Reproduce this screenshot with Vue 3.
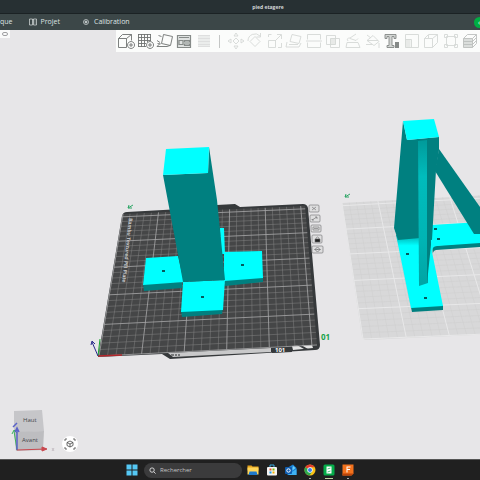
<template>
  <div class="app">
    <header class="titlebar">
      <span class="doc-name">pied etagere</span>
    </header>

    <nav class="tabs">
      <button class="tab first">que</button>
      <button class="tab">
        <svg viewBox="0 0 8 8" class="tab-icon"><path d="M.5 1h3v6h-3zM4.500 1h3v6h-3zM3.500 1.500h1M5.500 3h1M5.500 5h1" /></svg>
        Projet
      </button>
      <button class="tab">
        <svg viewBox="0 0 8 8" class="tab-icon"><circle cx="4" cy="4" r="2.500" /><circle cx="4" cy="4" r="1" class="solid" /></svg>
        Calibration
      </button>
      <button class="go" aria-label="Imprimer">‹</button>
    </nav>

    <main class="viewport">
      <svg class="scene" viewBox="0 30 480 429">
        <defs>
          <linearGradient id="rib" x1="0" y1="0" x2="0" y2="1">
            <stop offset="0" stop-color="#009a9a" />
            <stop offset="0.25" stop-color="#00bcbc" />
            <stop offset="0.7" stop-color="#00b4b4" />
            <stop offset="1" stop-color="#00a4a4" />
          </linearGradient>
          <linearGradient id="foot" x1="0" y1="0" x2="0" y2="1">
            <stop offset="0" stop-color="#008080" />
            <stop offset="0.2" stop-color="#00ffff" />
          </linearGradient>
        </defs>

        <!-- active plate -->
        <path class="bezel" d="M122 216Q123 212 127 212L217 207V205L235 204L240 207L303 204Q307 204 308 208L320 345Q320 350 315 350L170 359L162 354L98 357Z" />
        <path class="plate" d="M123 214L305 206L317 345L99 356Z" />
        <path class="bezel-light" d="M168 353L271 348V352L173 357Z" />
        <path class="slot" d="M292 346L312 345L313 348L293 350Z" />
        <path class="bezel" d="M271 347L291 346L292 352L272 353ZM297 345L301 345L308 349L304 349Z" />
        <path class="minor" :d="darkGrid.minor" />
        <path class="major" :d="darkGrid.major" />
        <text class="plate-text" transform="translate(129 218) rotate(96)">Bambu Textured PEI Plate</text>
        <text class="plate-id" x="275" y="352">101</text>
        <path class="print" d="M171 355h3M175 355h2M178 355h2" />
        <path class="pen" d="M128 208l5-3M129 205l-1 3h4" />
        <text class="plate-no" x="321" y="340">01</text>

        <!-- axes -->
        <path d="M98 356L100 339" stroke="#16a52f" />
        <path d="M98 356L122 355" stroke="#b5262b" stroke-width="1.500" />
        <path d="M98 356L92 342M91 345l1-4 3 3" class="axis-z" />

        <!-- plate buttons -->
        <g class="plate-btns">
          <rect x="309" y="205" width="10" height="7" rx="1" />
          <rect x="310" y="215" width="10" height="7" rx="1" />
          <rect x="311" y="225" width="10" height="7" rx="1" />
          <rect x="312" y="235" width="10" height="8" rx="1" />
          <rect x="312" y="246" width="11" height="7" rx="1" />
          <path d="M312 207l4 3M316 207l-4 3M312 220l5-3M315 217h2v2M312 219v1h2M313 227h6v3h-6zM314 228.500h4" />
          <path class="lock" d="M315 239h5v3h-5z" />
          <path d="M316 239v-1q1.500-2 3 0v1" />
          <circle cx="317.500" cy="249.500" r="2" />
          <path d="M314 249.500h7M317.500 249v1" />
        </g>

        <!-- post with cross foot -->
        <path class="lit" d="M220 228H224L225 254H221Z" />
        <path class="dark" d="M143 284L182 282V288L144 291ZM225 280L263 277V282L225 286ZM181 311L223 308L222 314L182 317Z" />
        <path class="lit" d="M146 258L178 256L184 282L143 285ZM224 252L262 251L263 278L224 281ZM183 282L225 280L223 310L181 312Z" />
        <path class="dark" d="M163 175L208 173L209 147L217 200L225 280L183 282L179 260Z" />
        <path class="lit" d="M166 149L209 147L208 173L163 175Z" />
        <path class="hole" d="M162 271h3M201 297h3M241 265h3" />

        <!-- inactive plate -->
        <path class="plate2" d="M342 203L526 193L584 330L366 340Q363 340 362 337Z" />
        <path class="minor2" :d="lightGrid.minor" />
        <path class="major2" :d="lightGrid.major" />
        <path class="pen" d="M345 197l5-3M346 194l-1 3h4" />

        <!-- braced post -->
        <path class="dark" d="M395 235L411 307L443 305V310L412 312ZM432 246L480 242V247L436 250Q432 251 433 256Z" />
        <path fill="url(#foot)" d="M396 235L429 230L432 252L443 306L411 308Z" />
        <path class="lit" d="M431 225L480 222V243L437 246Q432 246 432 252L428 245Z" />
        <path class="dark" d="M403 121L407 140L439 137V150L436 170L432 240L420 238L398 240L394 228Z" />
        <path class="dark" d="M439 149L480 207V234H474L435 171Z" />
        <path fill="url(#rib)" d="M418 141L427 140L428 283L419 286Z" />
        <path class="dark" d="M427 140L430 140L431 245L427 283Z" />
        <path class="lit" d="M403 121L434 119L439 137L407 140Z" />
        <path class="hole" d="M406 254h3M424 298h3M434 229h3M437 239h3" />

        <!-- view cube -->
        <path class="cube-top" d="M14 411L42 410L44 431L14 433Z" />
        <path class="cube-front" d="M14 432L44 431L43 450L16 451Z" />
        <text class="cube-text" x="23" y="422">Haut</text>
        <text class="cube-text" x="22" y="442">Avant</text>
        <path d="M17 450L14 431M12 434l2-4 3 3" class="axis-y" />
        <path d="M17 450V429M15 432l2-4 2 4M13 427l4-4" class="axis-v" />
        <path d="M17 450L46 449M42 447l5 2-5 2z" class="axis-x" />
        <path d="M52 448l2 3M54 448l-2 3" class="tick" />

        <circle cx="70" cy="444" r="8" fill="#fff" />
        <g class="fit">
          <path d="M65 441v-2h2M73 439h2v2M75 447v2h-2M67 449h-2v-2" />
          <path d="M70 441l3 1.500v3L70 447l-3-1.500v-3zM67 442.500l3 1.500 3-1.500M70 444v3" />
        </g>
      </svg>

      <button class="collapse" aria-label="Menu"><span></span></button>

      <div class="toolbar">
        <template v-for="t in tools" :key="t.name">
          <i v-if="t.name === 'sep'" class="sep"></i>
          <button v-else class="tool" :class="t.state" :aria-label="t.name">
            <svg viewBox="0 0 18 18">
              <path :d="t.d" />
              <path v-if="t.fill" class="fill" :d="t.fill" />
            </svg>
          </button>
        </template>
      </div>
    </main>

    <footer class="taskbar">
      <button class="task" aria-label="Démarrer">
        <svg viewBox="0 0 12 12"><path fill="#55c8f5" d="M.5.500h5v5h-5zM6.500.500h5v5h-5zM.5 6.500h5v5h-5zM6.500 6.500h5v5h-5z" /></svg>
      </button>
      <label class="search">
        <svg viewBox="0 0 8 8"><circle cx="3.500" cy="3.500" r="2.500" /><path d="M5.500 5.500l2 2" /></svg>
        <input type="text" placeholder="Rechercher" aria-label="Rechercher" />
      </label>
      <button class="task" aria-label="Explorateur">
        <svg viewBox="0 0 12 12">
          <path fill="#e6a31c" d="M.5 1.500h4l1 1h6v4H.5z" />
          <path fill="#ffd65a" d="M.5 3.500h11v7H.5z" />
          <path fill="#1e79cc" d="M2.500 7.500h7l1 3.500h-9z" />
        </svg>
      </button>
      <button class="task" aria-label="Store">
        <svg viewBox="0 0 12 12">
          <path d="M4 3V1h4v2" fill="none" stroke="#39a8dd" />
          <rect x="1" y="3" width="10" height="8.500" rx="1" fill="#f4f4f4" />
          <path fill="#e8502f" d="M3.500 4.500h2v2h-2z" /><path fill="#7fba00" d="M6.500 4.500h2v2h-2z" />
          <path fill="#1a9ce8" d="M3.500 7.500h2v2h-2z" /><path fill="#f5b400" d="M6.500 7.500h2v2h-2z" />
        </svg>
      </button>
      <button class="task" aria-label="Outlook">
        <svg viewBox="0 0 12 12">
          <path fill="#1a84d8" d="M2 4L8 .5l3.500 3.500v7h-9z" />
          <path fill="#6bd0fa" d="M8 2l2.500 2-3 2.500V4z" />
          <path fill="#3fb2f2" d="M4 10l7.500-5V11H3z" />
          <rect y="3" width="7" height="7" rx="1" fill="#0f5cae" />
          <circle cx="3.500" cy="6.500" r="1.700" fill="none" stroke="#fff" />
        </svg>
      </button>
      <button class="task run" aria-label="Chrome">
        <svg viewBox="0 0 12 12">
          <circle cx="6" cy="6" r="5.500" fill="#fbc116" />
          <path fill="#e33b2e" d="M6 6L1.200 3.200A5.500 5.500 0 0 1 10.800 3.300H6z" />
          <path fill="#2da94f" d="M1.200 3.200A5.500 5.500 0 0 0 5.500 11.500L8.300 7.300 6 6z" />
          <circle cx="6" cy="6" r="2.700" fill="#fff" /><circle cx="6" cy="6" r="2" fill="#3b7ded" />
        </svg>
      </button>
      <button class="task run active" aria-label="Bambu Studio">
        <svg viewBox="0 0 12 12">
          <rect x=".5" y=".5" width="11" height="11" rx="1.500" fill="#04ac49" />
          <path fill="#fff" d="M3.500 2.500h5v7h-5z" />
          <path d="M4.500 5l3-1M4.500 8l3-1" stroke="#04ac49" stroke-width=".7" />
        </svg>
      </button>
      <button class="task run" aria-label="Fusion">
        <svg viewBox="0 0 12 12">
          <path fill="#f2711c" d="M.5.500h11v9l-2 2h-9z" />
          <path fill="#b9440b" d="M.5 9.500h11l-2 2h-9z" />
          <path fill="#fff" d="M4.500 2.500h4v1h-3v1.500h2.500v1H5.500V8.500h-1z" />
        </svg>
      </button>
    </footer>
  </div>
</template>

<script setup>
// each plate is a perspective quad: near-left, near-right, far-right, far-left
const SIZE = 256
const darkGrid = makeGrid([[99, 356], [317, 345], [305, 206], [123, 214]], 1.18)
const lightGrid = makeGrid([[363, 339], [584, 330], [526, 193], [342, 203]], 1.18)

function makeGrid(quad, depth) {
  const [a, b, c, d] = quad
  const at = (x, y) => {
    const u = x / SIZE
    const v = y / SIZE
    const w = [(1 - u) * (1 - v), u * (1 - v), u * v * depth, (1 - u) * v * depth]
    const sum = w[0] + w[1] + w[2] + w[3]
    return [0, 1]
      .map((i) => ((w[0] * a[i] + w[1] * b[i] + w[2] * c[i] + w[3] * d[i]) / sum).toFixed(1))
      .join(' ')
  }
  let minor = ''
  let major = ''
  for (let n = 0; n <= SIZE; n += 10) {
    const line = `M${at(n, 0)}L${at(n, SIZE)}M${at(0, n)}L${at(SIZE, n)}`
    if (n % 50 === 0) major += line
    else minor += line
  }
  return { minor, major }
}

const tools = [
  { name: 'Ajouter', state: 'on', d: 'M1.500 6.500h8v9h-8zM1.500 6.500l4-4h9l-5 4M14.500 2.500v6M14 9.500a3.500 3.500 0 1 0 .1 0M14 11v4M12 13h4' },
  { name: 'Ajouter un plateau', state: 'on', d: 'M2 2.500h13M2 5.500h13M2 8.500h13M2 11.500h8M2 14.500h8M2.500 2v13M5.500 2v13M8.500 2v13M11.500 2v8M14.500 2v7M14 9.500a3.500 3.500 0 1 0 .1 0M14 11v4M12 13h4' },
  { name: 'Orienter', state: 'on', d: 'M7.500 2.500l9 2-2 9-9-2zM2.500 3.500l3 1M1 8.500l3 2M1.500 11.500l3 .500M1 14.500h10l3-1M1 14.500l3-3' },
  { name: 'Organiser', state: 'on shade', d: 'M2.500 3.500h13v12h-13zM4 5.500h10M4 8.500h4v4H4zM9.500 8.500h5v1.500h-5zM9.500 12h5v1.500h-5z' },
  { name: 'Calques', state: 'ghost', d: 'M3 3.500h12M3 6.500h12M3 9.500h12M3 12.500h12M3 14.500h12', fill: 'M3 3h12v12H3z' },
  { name: 'sep' },
  { name: 'Déplacer', d: 'M9 1l2 3H7zM9 17l2-3H7zM1 9l3-2v4zM17 9l-3-2v4zM9 6l3 3-3 3-3-3z' },
  { name: 'Pivoter', d: 'M9 4.500l5 5-5 5-5-5zM2 9a7 7 0 0 1 12-5M14.500 1v4h-4' },
  { name: 'Échelle', d: 'M2.500 8.500h7v7h-7zM2.500 5v-2.500h3M9 9l6-6M11 2.500h4.500V7M15.500 11v4.500H12' },
  { name: 'Poser à plat', d: 'M7 2.500l9 2-2 7-9-2zM2 10l-1 5h13l2-4M4 12.500h9' },
  { name: 'Couper', d: 'M2.500 7.500v-5h13v5M2.500 10.500v5h13v-5M1 9h16' },
  { name: 'Booléen', d: 'M2.500 3.500h9v9h-9zM6.500 6.500h9v9h-9z', fill: 'M6.500 6.500h5v6h-5z' },
  { name: 'Supports', d: 'M3 10.500h11l2 5H2zM4 9q-2-3 2-3l6-4M6 6.500l6 2 2-2' },
  { name: 'Peindre', d: 'M3 8.500l6-5 6 6-5 4zM3 8.500h11M3 3l4 3M15 11v5M2 12.500h6' },
  { name: 'Texte', state: 'text', d: 'M2 2.500h11v4h-2v-2H9v9h2v2H4v-2h2v-9H4v2H2z', fill: 'M12 10h4v6h-4z' },
  { name: 'Mesurer', d: 'M2.500 2.500h13v13h-13zM2.500 7.500h6v8', fill: 'M2.500 7.500h5v8h-5z' },
  { name: 'Assembler', d: 'M2.500 6.500h8v9h-8zM2.500 6.500l4-4h9l-5 4M15.500 2.500v8l-5 5M6.500 3v3' },
  { name: 'Cadre', d: 'M4.500 4.500h9v9h-9zM2.500 2.500h3v3h-3zM12.500 2.500h3v3h-3zM2.500 12.500h3v3h-3zM12.500 12.500h3v3h-3z' },
  { name: 'Vue assemblage', state: 'cube', d: 'M2.500 6.500h9v9h-9zM2.500 6.500l4-4h9l-4 4M15.500 2.500v9l-4 4M2.500 9.500h9l4-4M2.500 12.500h9l4-4', fill: 'M2.500 6.500h9v9h-9z' },
]
</script>

<style>
body {
  margin: 0;
  background: #e7e6e8;
}
</style>

<style scoped>
.app {
  display: flex;
  flex-direction: column;
  min-height: 100vh;
  overflow: hidden;
  font-family: "Open Sans", "Liberation Sans", sans-serif;
  background: #e7e6e8;
}

button {
  border: none;
  padding: 0;
  background: none;
  font-family: inherit;
  cursor: pointer;
}

.titlebar {
  display: flex;
  align-items: center;
  justify-content: center;
  height: 14px;
  padding-left: 56px;
  background: #273033;
  border-bottom: 1px solid #1b2224;
  box-sizing: border-box;
}

.doc-name {
  color: #d3d7d8;
  font-size: 5px;
  font-weight: 700;
}

.tabs {
  display: flex;
  align-items: center;
  height: 16px;
  overflow: hidden;
  background: #3c4748;
}

.tab {
  display: flex;
  align-items: center;
  gap: 4px;
  margin-right: 22px;
  color: #dfe3e3;
  font-size: 7px;
  line-height: 16px;
}

.tab.first {
  margin-right: 16px;
}

.tab-icon {
  width: 8px;
  height: 8px;
  fill: none;
  stroke: #c9cfcf;
  stroke-width: 0.8;
}

.solid {
  fill: #c9cfcf;
}

.go {
  flex: none;
  width: 12px;
  height: 11px;
  margin-left: auto;
  margin-right: -6px;
  border-radius: 6px;
  background: #00ae42;
  color: #fff;
  font-size: 7px;
  line-height: 9px;
  text-align: left;
  padding-left: 4px;
}

.viewport {
  position: relative;
  flex: 1;
}

.scene {
  display: block;
  width: 100%;
  fill: none;
}

.bezel { fill: #36393b; }
.bezel-light { fill: #c9c9ca; }
.slot { fill: #e4e4e4; }
.plate { fill: #454647; }
.minor { stroke: #828283; stroke-width: 0.5; }
.major { stroke: #a8a8a9; stroke-width: 0.8; }
.plate2 { fill: #d8d8d9; }
.minor2 { stroke: #cecece; stroke-width: 0.5; }
.major2 { stroke: #e8e8e9; }
.plate-text { fill: #c6c6c7; font-size: 5px; font-weight: 700; }
.plate-id { fill: #fff; font-size: 6px; font-weight: 700; }
.print { stroke: #77797a; stroke-width: 2; }
.pen { stroke: #2fa667; }
.plate-no { fill: #17a34a; font-size: 8px; font-weight: 700; }
.axis-z { stroke: #2a2a8c; }
.lit { fill: #00ffff; }
.dark { fill: #008080; }
.hole { stroke: #04595c; stroke-width: 2; }
.plate-btns { fill: #dededf; stroke: #6d6d6e; stroke-width: 0.6; }
.plate-btns path { fill: none; }
.plate-btns .lock { fill: #222; }
.cube-top { fill: #c6c6c9; }
.cube-front { fill: #bdbdc0; }
.cube-text { fill: #44454a; font-size: 6px; }
.axis-y { stroke: #3cb45c; }
.axis-v { stroke: #5b62c8; stroke-width: 1.5; }
.axis-x { stroke: #c9484f; fill: #c9484f; }
.tick { stroke: #b9b0b6; stroke-width: 0.7; }
.fit { stroke: #444; stroke-width: 0.8; }

.collapse {
  position: absolute;
  top: 0;
  left: 0;
  display: flex;
  align-items: center;
  justify-content: center;
  width: 10px;
  height: 8px;
  background: #fafafa;
}

.collapse span {
  width: 4px;
  height: 2px;
  border: 1px solid #a0a0a2;
  border-radius: 2px;
}

.toolbar {
  position: absolute;
  top: 0;
  left: 116px;
  right: 0;
  display: flex;
  align-items: center;
  height: 22px;
  background: #fbfcfb;
}

.sep {
  width: 12px;
  height: 13px;
  background: linear-gradient(#c4c6c5, #c4c6c5) center / 1px 100% no-repeat;
}

.tool {
  display: flex;
  flex: 1;
  justify-content: center;
  color: #d5d8d6;
}

.tool svg {
  width: 18px;
  height: 18px;
  fill: none;
  stroke: currentColor;
  stroke-width: 0.9;
}

.tool .fill {
  fill: currentColor;
  fill-opacity: 0.5;
  stroke: none;
}

.tool.on { color: #6f7372; }
.tool.shade { color: #868b89; }
.tool.shade svg { stroke-width: 1.2; }
.tool.shade path { fill: #dfe2e1; }
.tool.ghost { color: #dcdedd; }
.tool.text { color: #858987; }
.tool.text path { fill: #d3d6d4; }
.tool.text .fill { fill: currentColor; fill-opacity: 1; }
.tool.cube { color: #bcc0be; }

.taskbar {
  display: flex;
  align-items: center;
  justify-content: center;
  gap: 7px;
  height: 21px;
  background: #202020;
  border-top: 1px solid #555;
  box-sizing: border-box;
}

.task {
  position: relative;
  display: flex;
}

.task svg {
  width: 12px;
  height: 12px;
}

.run::after {
  content: "";
  position: absolute;
  left: 5px;
  bottom: -3px;
  width: 2px;
  height: 1px;
  background: #a9a9a9;
}

.run.active::after {
  left: 2px;
  width: 8px;
  background: #b9d3a0;
}

.search {
  display: flex;
  align-items: center;
  gap: 4px;
  width: 98px;
  height: 15px;
  margin: 0 -2px 0 -1px;
  padding: 0 5px;
  box-sizing: border-box;
  border-radius: 8px;
  background: #3b3b3c;
}

.search svg {
  flex: none;
  width: 7px;
  height: 7px;
  fill: none;
  stroke: #e6e6e6;
}

.search input {
  flex: 1;
  min-width: 0;
  padding: 0;
  border: none;
  outline: none;
  background: none;
  color: #ddd;
  font-family: inherit;
  font-size: 6px;
}

.search input::placeholder {
  color: #c4c4c4;
  opacity: 1;
}
</style>
